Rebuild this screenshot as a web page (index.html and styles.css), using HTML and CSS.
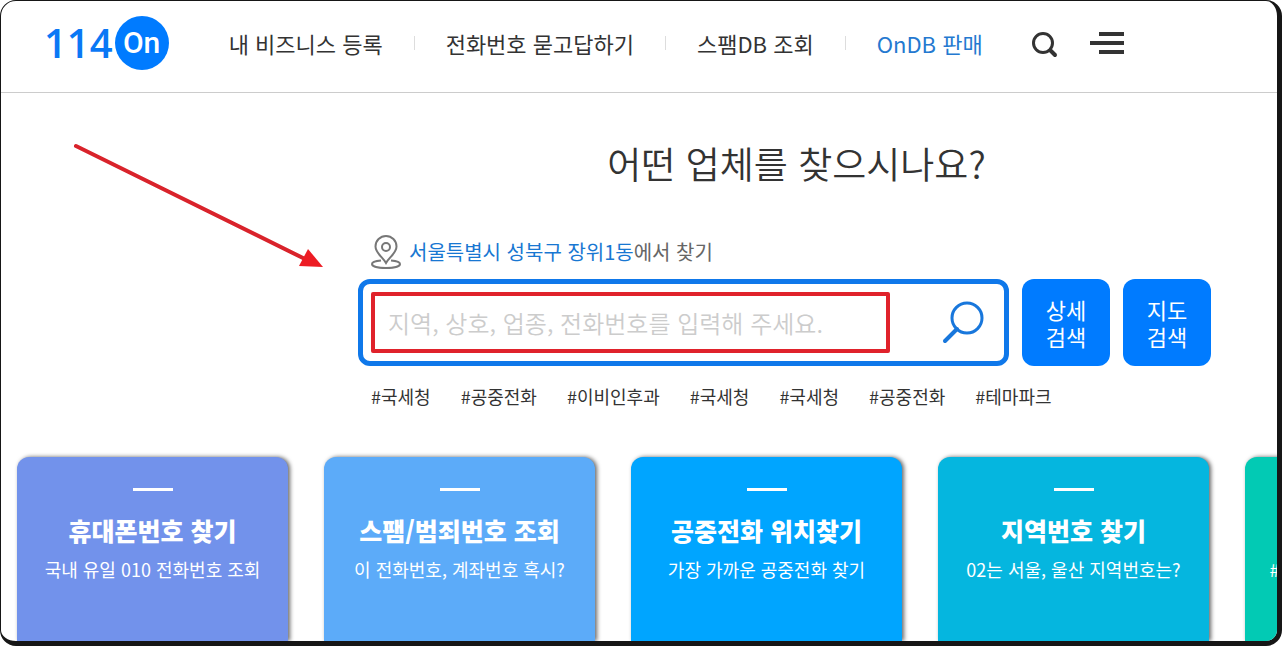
FILE: index.html
```html
<!DOCTYPE html>
<html lang="ko">
<head>
    <meta charset="UTF-8">
    <title>114On</title>
    <link rel="stylesheet" href="styles.css">
</head>
<body>
    <div class="page">
        <header class="header">
            <a class="logo" href="#">
                <span class="logo-number">114</span>
                <span class="logo-on">On</span>
            </a>
            <nav class="menu">
                <a href="#">내 비즈니스 등록</a>
                <a href="#">전화번호 묻고답하기</a>
                <a href="#">스팸DB 조회</a>
                <a class="active" href="#">OnDB 판매</a>
            </nav>
            <button class="icon-btn" type="button" aria-label="검색">
                <svg width="26" height="30" viewBox="0 -4 26 30" fill="none" stroke="#333">
                    <circle cx="11" cy="11" r="9.500" stroke-width="3"/>
                    <path d="M18.500 18.500L23 23" stroke-width="4" stroke-linecap="round"/>
                </svg>
            </button>
            <button class="icon-btn" type="button" aria-label="전체 메뉴">
                <svg width="34" height="22" viewBox="0 0 34 22" fill="#333">
                    <rect x="9" y="0" width="25" height="4"/>
                    <rect x="0" y="9" width="34" height="4"/>
                    <rect x="9" y="18" width="25" height="4"/>
                </svg>
            </button>
        </header>

        <main>
            <section class="search">
                <h1>어떤 업체를 찾으시나요?</h1>
                <p class="location">
                    <svg width="30" height="34" viewBox="0 0 30 34" fill="none" stroke="#777" stroke-width="2">
                        <path d="M10 25.500C4.500 26 1 27.300 1 29C1 31.300 7 33 15 33S29 31.300 29 29C29 27.300 25.500 26 20 25.500"/>
                        <path d="M15 28C12 22.500 4.500 18 4.500 11.500A10.500 10.500 0 0 1 25.500 11.500C25.500 18 18 22.500 15 28Z"/>
                        <circle cx="15" cy="12" r="4"/>
                    </svg>
                    <span><a href="#">서울특별시 성북구 장위1동</a>에서 찾기</span>
                </p>
                <form class="search-form">
                    <div class="search-box">
                        <input type="text" aria-label="검색어" placeholder="지역, 상호, 업종, 전화번호를 입력해 주세요.">
                        <button class="search-btn" type="button" aria-label="찾기">
                            <svg width="42" height="44" viewBox="0 0 42 44" fill="none" stroke="#1877dc" stroke-width="3">
                                <circle cx="25" cy="17" r="15"/>
                                <path d="M15 28L3 40" stroke-width="4" stroke-linecap="round"/>
                            </svg>
                        </button>
                        <span class="mark"></span>
                    </div>
                    <button class="side-btn" type="button">상세<br>검색</button>
                    <button class="side-btn" type="button">지도<br>검색</button>
                </form>
                <div class="tags">
                    <a href="#">#국세청</a>
                    <a href="#">#공중전화</a>
                    <a href="#">#이비인후과</a>
                    <a href="#">#국세청</a>
                    <a href="#">#국세청</a>
                    <a href="#">#공중전화</a>
                    <a href="#">#테마파크</a>
                </div>
            </section>

            <section class="cards">
                <a class="card phone" href="#">
                    <h2>휴대폰번호 찾기</h2>
                    <p>국내 유일 010 전화번호 조회</p>
                </a>
                <a class="card spam" href="#">
                    <h2>스팸/범죄번호 조회</h2>
                    <p>이 전화번호, 계좌번호 혹시?</p>
                </a>
                <a class="card booth" href="#">
                    <h2>공중전화 위치찾기</h2>
                    <p>가장 가까운 공중전화 찾기</p>
                </a>
                <a class="card area" href="#">
                    <h2>지역번호 찾기</h2>
                    <p>02는 서울, 울산 지역번호는?</p>
                </a>
                <a class="card theme" href="#">
                    <h2>테마 찾기</h2>
                    <p>#국세청 #공중전화 #테마파크</p>
                </a>
            </section>
        </main>

        <svg class="arrow" width="252" height="126" viewBox="0 0 252 126">
            <path d="M3 3L232 116" stroke="#d9232b" stroke-width="4" stroke-linecap="round"/>
            <path d="M235 106L250 124L226 123Z" fill="#ed1c24"/>
        </svg>
    </div>
</body>
</html>
```
FILE: styles.css
```css
* {
    box-sizing: border-box;
}

body {
    margin: 0;
    background-color: #fff;
    color: #333;
    font-family: "Noto Sans CJK KR", "Noto Sans", sans-serif;
}

h1, h2, p {
    margin: 0;
}

a {
    color: inherit;
    text-decoration: none;
}

button {
    padding: 0;
    border: none;
    background: none;
    font-family: inherit;
    cursor: pointer;
}

svg {
    display: block;
}

.page {
    position: relative;
    display: flex;
    flex-direction: column;
    height: 100vh;
    border: 1px solid #161616;
    border-right-width: 5px;
    border-bottom-width: 5px;
    border-radius: 16px;
    overflow: hidden;
}

/* header */
.header {
    display: flex;
    align-items: center;
    height: 92px;
    padding: 0 43px 8px;
    border-bottom: 1px solid #ccc;
}

.logo {
    display: flex;
    align-items: center;
    gap: 2px;
    margin-right: 60px;
    color: #0a78f5;
}

.logo-number {
    font-family: "Open Sans", sans-serif;
    font-size: 40px;
    font-weight: 600;
    line-height: 52px;
}

.logo-on {
    width: 54px;
    height: 54px;
    border-radius: 50%;
    background-color: #007bff;
    color: #fff;
    font-family: Roboto, sans-serif;
    font-size: 30px;
    font-weight: 500;
    line-height: 54px;
    text-align: center;
}

.menu {
    display: flex;
    margin-right: 49px;
    font-size: 22px;
    line-height: 32px;
    white-space: nowrap;
}

.menu a {
    display: flex;
    align-items: center;
}

.menu a + a::before {
    content: "";
    width: 1px;
    height: 14px;
    margin: 0 31px;
    background-color: #ddd;
}

.menu .active {
    color: #2479d0;
}

.icon-btn + .icon-btn {
    margin-left: 32px;
}

/* search */
.search {
    width: 853px;
    margin: 0 66px 0 auto;
}

.search h1 {
    padding: 42px 0 40px 24px;
    font-size: 37px;
    font-weight: 350;
    line-height: 56px;
    text-align: center;
}

.location {
    display: flex;
    align-items: center;
    gap: 8px;
    padding: 4px 13px 10px;
    color: #666;
    font-size: 20px;
    line-height: 34px;
}

.location a {
    color: #1877d2;
}

.search-form {
    display: flex;
    gap: 13px;
}

.search-box {
    position: relative;
    display: flex;
    flex: 1;
    align-items: center;
    height: 87px;
    padding: 0 20px 0 25px;
    border: 5px solid #0f78ea;
    border-radius: 12px;
}

.search-box input {
    flex: 1;
    min-width: 0;
    padding: 0;
    border: none;
    outline: none;
    background: none;
    color: #333;
    font-family: inherit;
    font-size: 24px;
    font-weight: 350;
}

.search-box input::placeholder {
    color: #ccc;
    opacity: 1;
}

.mark {
    position: absolute;
    top: 8px;
    right: 114px;
    bottom: 8px;
    left: 8px;
    border: 4px solid #e0222b;
    border-radius: 2px;
    pointer-events: none;
}

.side-btn {
    width: 88px;
    border-radius: 12px;
    background-color: #007bff;
    color: #fff;
    font-size: 22px;
    line-height: 27px;
}

.tags {
    display: flex;
    gap: 30px;
    padding: 16px 13px 0;
    font-size: 18px;
    line-height: 28px;
    white-space: nowrap;
}

/* cards */
main {
    display: flex;
    flex: 1;
    flex-direction: column;
    min-height: 0;
}

.cards {
    display: flex;
    flex: 1;
    gap: 36px;
    padding: 47px 0 0 16px;
}

.card {
    flex: none;
    width: 271px;
    padding-top: 31px;
    border-radius: 12px 12px 0 0;
    box-shadow: 2px 0 4px rgba(0, 0, 0, 0.6);
    color: #fff;
    text-align: center;
    white-space: nowrap;
}

.card::before {
    content: "";
    display: block;
    width: 40px;
    height: 3px;
    margin: 0 auto 22px;
    background-color: #fff;
}

.card h2 {
    font-size: 25px;
    font-weight: 900;
    line-height: 34px;
}

.card p {
    padding-top: 8px;
    font-size: 18px;
    line-height: 28px;
}

.phone {
    background-color: #7292eb;
}

.spam {
    background-color: #5cabf9;
}

.booth {
    background-color: #00a5ff;
}

.area {
    background-color: #05b6df;
}

.theme {
    background-color: #02cab4;
}

/* pointer to the search box */
.arrow {
    position: absolute;
    top: 142px;
    left: 72px;
}
```
